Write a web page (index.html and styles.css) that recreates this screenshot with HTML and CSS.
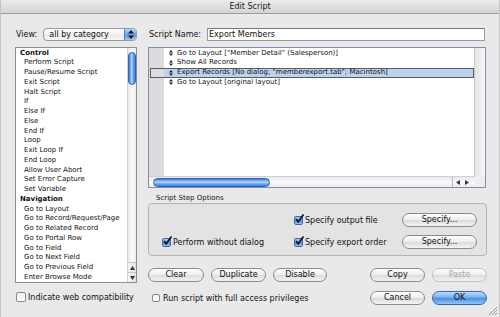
FILE: index.html
```html
<!DOCTYPE html>
<html>
<head>
<meta charset="utf-8">
<link rel="stylesheet" href="styles.css">
</head>
<body>
<div class="window">
  <div class="titlebar">Edit Script</div>
  <div class="main">
    <div class="left">
      <div class="view-row">
        <span class="lbl">View:</span>
        <div class="popup">
          <span class="popup-text">all by category</span>
          <span class="stepper"><svg width="6" height="9" viewBox="0 0 6 9"><path d="M0 3.5 L3 0 L6 3.5 Z M0 5.5 L3 9 L6 5.5 Z" fill="#1a1a1a"/></svg></span>
        </div>
      </div>
      <div class="steplist">
        <div class="items">
          <div class="cat">Control</div>
          <div class="it">Perform Script</div>
          <div class="it">Pause/Resume Script</div>
          <div class="it">Exit Script</div>
          <div class="it">Halt Script</div>
          <div class="it">If</div>
          <div class="it">Else If</div>
          <div class="it">Else</div>
          <div class="it">End If</div>
          <div class="it">Loop</div>
          <div class="it">Exit Loop If</div>
          <div class="it">End Loop</div>
          <div class="it">Allow User Abort</div>
          <div class="it">Set Error Capture</div>
          <div class="it">Set Variable</div>
          <div class="cat">Navigation</div>
          <div class="it">Go to Layout</div>
          <div class="it">Go to Record/Request/Page</div>
          <div class="it">Go to Related Record</div>
          <div class="it">Go to Portal Row</div>
          <div class="it">Go to Field</div>
          <div class="it">Go to Next Field</div>
          <div class="it">Go to Previous Field</div>
          <div class="it">Enter Browse Mode</div>
        </div>
        <div class="vscroll">
          <div class="vtrack"><div class="vthumb"></div></div>
          <div class="varrow"><svg width="5" height="4" viewBox="0 0 5 4"><path d="M0 4 L2.5 0 L5 4 Z" fill="#333"/></svg></div>
          <div class="varrow"><svg width="5" height="4" viewBox="0 0 5 4"><path d="M0 0 L2.5 4 L5 0 Z" fill="#333"/></svg></div>
        </div>
      </div>
      <div class="check-row left-check">
        <span class="cb"></span>
        <span>Indicate web compatibility</span>
      </div>
    </div>
    <div class="right">
      <div class="name-row">
        <span class="lbl">Script Name:</span>
        <div class="input">Export Members</div>
      </div>
      <div class="script-box">
        <div class="steps">
          <div class="step"><span class="handle"><svg width="4" height="6" viewBox="0 0 4 6"><path d="M0 2.5 L2 0 L4 2.5 Z M0 3.5 L2 6 L4 3.5 Z" fill="#222"/></svg></span>Go to Layout ["Member Detail" (Salesperson)]</div>
          <div class="step"><span class="handle"><svg width="4" height="6" viewBox="0 0 4 6"><path d="M0 2.5 L2 0 L4 2.5 Z M0 3.5 L2 6 L4 3.5 Z" fill="#222"/></svg></span>Show All Records</div>
          <div class="step sel"><span class="handle"><svg width="4" height="6" viewBox="0 0 4 6"><path d="M0 2.5 L2 0 L4 2.5 Z M0 3.5 L2 6 L4 3.5 Z" fill="#222"/></svg></span>Export Records [No dialog; "memberexport.tab"; Macintosh]</div>
          <div class="step"><span class="handle"><svg width="4" height="6" viewBox="0 0 4 6"><path d="M0 2.5 L2 0 L4 2.5 Z M0 3.5 L2 6 L4 3.5 Z" fill="#222"/></svg></span>Go to Layout [original layout]</div>
        </div>
        <div class="vtrack2"></div>
        <div class="hscroll">
          <div class="htrack"><div class="hthumb"></div></div>
          <div class="harrows">
            <svg width="4" height="5" viewBox="0 0 4 5"><path d="M4 0 L0 2.5 L4 5 Z" fill="#333"/></svg>
            <svg width="4" height="5" viewBox="0 0 4 5"><path d="M0 0 L4 2.5 L0 5 Z" fill="#333"/></svg>
          </div>
        </div>
        <div class="corner"></div>
      </div>
      <div class="opt-label">Script Step Options</div>
      <div class="group">
        <div class="g-empty"></div>
        <div class="check-row"><span class="cb on"><svg width="10" height="10" viewBox="0 0 10 10"><path d="M2 5 L4.2 7.8 L9.5 0.5" fill="none" stroke="#111" stroke-width="1.6"/></svg></span><span>Specify output file</span></div>
        <div class="btn spec">Specify...</div>
        <div class="check-row"><span class="cb on"><svg width="10" height="10" viewBox="0 0 10 10"><path d="M2 5 L4.2 7.8 L9.5 0.5" fill="none" stroke="#111" stroke-width="1.6"/></svg></span><span>Perform without dialog</span></div>
        <div class="check-row"><span class="cb on"><svg width="10" height="10" viewBox="0 0 10 10"><path d="M2 5 L4.2 7.8 L9.5 0.5" fill="none" stroke="#111" stroke-width="1.6"/></svg></span><span>Specify export order</span></div>
        <div class="btn spec">Specify...</div>
      </div>
      <div class="btn-row">
        <div class="btn w56">Clear</div>
        <div class="btn w55">Duplicate</div>
        <div class="btn w54">Disable</div>
        <div class="spacer"></div>
        <div class="btn w55">Copy</div>
        <div class="btn w55 disabled">Paste</div>
      </div>
      <div class="btn-row bottom">
        <div class="check-row run"><span class="cb small"></span><span>Run script with full access privileges</span></div>
        <div class="spacer"></div>
        <div class="btn w55">Cancel</div>
        <div class="btn w55 ok">OK</div>
      </div>
    </div>
  </div>
  <svg class="grip" width="11" height="11" viewBox="0 0 11 11"><path d="M10 2 L2 10 M10 5 L5 10 M10 8 L8 10" stroke="#9a9a9a" stroke-width="1"/></svg>
</div>
</body>
</html>
```

FILE: styles.css
```css
* { box-sizing: border-box; }
html, body { margin: 0; padding: 0; }
body {
  width: 500px;
  height: 317px;
  overflow: hidden;
  font-family: "DejaVu Sans", Verdana, sans-serif;
  color: #111;
}
.window {
  position: relative;
  width: 500px;
  height: 317px;
  background: #e9e9e9;
  border-left: 1px solid #c4c4c4;
  border-right: 1px solid #c4c4c4;
}
.titlebar {
  height: 14px;
  line-height: 13px;
  text-align: center;
  font-size: 8px;
  color: #1c1c1c;
  background: linear-gradient(#ececec, #d4d4d4);
  border-bottom: 1px solid #9c9c9c;
}
.main {
  display: flex;
  gap: 11px;
  padding: 14px 0 0 14px;
}
.left {
  width: 122px;
  display: flex;
  flex-direction: column;
}
.right {
  width: 339px;
  display: flex;
  flex-direction: column;
}
.lbl { font-size: 8px; }
.view-row {
  display: flex;
  align-items: center;
  height: 13px;
  gap: 6px;
  padding-left: 1px;
}
.popup {
  flex: 1;
  height: 13px;
  display: flex;
  align-items: center;
  border: 1px solid #9a9a9a;
  border-radius: 4px;
  background: linear-gradient(#ffffff, #f1f1f1 50%, #e6e6e6 51%, #f7f7f7);
  overflow: hidden;
}
.popup-text {
  flex: 1;
  font-size: 8px;
  padding-left: 5px;
  line-height: 11px;
}
.stepper {
  width: 12px;
  height: 11px;
  display: flex;
  align-items: center;
  justify-content: center;
  background: linear-gradient(#b9d6f8, #6aa4ea 50%, #4f90e4 51%, #9fcaf6);
  border-left: 1px solid #5b84bf;
}
.steplist {
  margin-top: 6px;
  height: 236px;
  border: 1px solid #8e8e8e;
  background: #fff;
  display: flex;
}
.items {
  flex: 1;
  font-size: 7px;
  padding-top: 0.5px;
}
.cat, .it {
  height: 9.75px;
  line-height: 9.75px;
  white-space: nowrap;
}
.cat { font-weight: bold; padding-left: 4px; }
.it { padding-left: 8px; }
.vscroll {
  width: 9px;
  display: flex;
  flex-direction: column;
  border-left: 1px solid #d0d0d0;
  background: linear-gradient(to right, #e8e8e8, #fbfbfb 50%, #ececec);
}
.vtrack { flex: 1; padding: 4px 0 0 0; }
.vthumb {
  width: 8px;
  height: 33px;
  border-radius: 4px;
  border: 1px solid #2e62b4;
  background: linear-gradient(to right, #3b79d8, #b4d6fa 45%, #6aa6ec 70%, #3f7fd9);
}
.varrow {
  height: 10px;
  display: flex;
  align-items: center;
  justify-content: center;
  border-top: 1px solid #c8c8c8;
  background: linear-gradient(to right, #f4f4f4, #e2e2e2);
}
.check-row {
  display: flex;
  align-items: center;
  gap: 3px;
  font-size: 8px;
  white-space: nowrap;
}
.left-check { margin-top: 9px; height: 10px; padding-left: 1px; gap: 2px; }
.cb {
  width: 10px;
  height: 10px;
  flex: none;
  border: 1px solid #8a8a8a;
  border-radius: 2px;
  background: linear-gradient(#f0f0f0, #ffffff);
  position: relative;
}
.cb.small { width: 8px; height: 8px; }
.cb.on {
  width: 9px;
  height: 9px;
  border-color: #3f68a8;
  background: linear-gradient(#a9cdf6, #5b9be6 50%, #4a8ce0 51%, #96c6f4);
}
.cb.on svg { position: absolute; left: -1px; top: -3px; }
.name-row {
  display: flex;
  align-items: center;
  height: 13px;
  gap: 6px;
  padding-left: 1px;
}
.input {
  width: 278px;
  height: 13px;
  border: 1px solid #9a9a9a;
  border-top-color: #777;
  background: #fff;
  font-size: 8px;
  line-height: 11px;
  padding-left: 1px;
}
.script-box {
  margin-top: 6px;
  width: 338px;
  height: 141px;
  border: 1px solid #7d8fae;
  background: #fff;
  display: grid;
  grid-template-columns: 1fr 10px;
  grid-template-rows: 1fr 11px;
}
.steps {
  background: linear-gradient(to right, #dcdcdc 0, #dcdcdc 15px, #fff 15px);
  padding-top: 0.5px;
  font-size: 7px;
  border-right: 1px solid #c8c8c8;
}
.step {
  height: 9.7px;
  line-height: 9.7px;
  padding-left: 20px;
  display: flex;
  align-items: center;
  white-space: nowrap;
}
.handle { width: 8px; display: flex; align-items: center; }
.step.sel {
  background: linear-gradient(to right, #dcdcdc 0, #dcdcdc 14px, #bcd3ef 14px);
  outline: 1px solid #5c5c5c;
  outline-offset: -1px;
  margin-left: 1px;
  padding-left: 19px;
}
.vtrack2 {
  background: linear-gradient(to right, #e6e6e6, #f7f7f7);
}
.hscroll {
  display: flex;
  align-items: center;
  border-top: 1px solid #d0d0d0;
  background: linear-gradient(#e8e8e8, #fafafa 50%, #ececec);
}
.htrack { flex: 1; padding-left: 4px; display: flex; align-items: center; }
.hthumb {
  width: 117px;
  height: 9px;
  border-radius: 5px;
  border: 1px solid #2e62b4;
  background: linear-gradient(#3b79d8, #b4d6fa 45%, #6aa6ec 70%, #3f7fd9);
}
.harrows {
  width: 20px;
  height: 10px;
  display: flex;
  align-items: center;
  justify-content: space-around;
  border-left: 1px solid #b8b8b8;
  margin-right: 3px;
}
.corner { background: #eeeeee; }
.opt-label {
  margin-top: 6px;
  height: 9px;
  line-height: 9px;
  font-size: 7px;
  padding-left: 8px;
}
.group {
  width: 339px;
  height: 53px;
  border: 1px solid #b4b4b4;
  border-radius: 4px;
  background: #e3e3e3;
  display: grid;
  grid-template-columns: 132px 108px 75px;
  grid-template-rows: 14px 14px;
  row-gap: 8px;
  align-items: center;
  padding: 9px 0 0 13px;
}
.group .check-row { gap: 2px; }
.btn {
  height: 14px;
  border: 1px solid #8a8a8a;
  border-radius: 7px;
  background: linear-gradient(#fefefe, #efefef 45%, #dcdcdc 55%, #f4f4f4);
  font-size: 8px;
  line-height: 12px;
  text-align: center;
  white-space: nowrap;
}
.spec { width: 75px; }
.w56 { width: 56px; }
.w55 { width: 55px; }
.w54 { width: 54px; }
.btn-row {
  margin-top: 12px;
  display: flex;
  align-items: center;
  gap: 7px;
  height: 14px;
}
.btn-row.bottom { margin-top: 9px; }
.spacer { flex: 1; }
.disabled { color: #a8a8a8; border-color: #c2c2c2; }
.ok {
  border-color: #3766ad;
  background: linear-gradient(#bcdcfb, #75aef0 45%, #4a8fe6 55%, #93c6f7);
}
.run { padding-left: 4px; gap: 3px; }
.grip { position: absolute; right: 1px; bottom: 1px; }
```
